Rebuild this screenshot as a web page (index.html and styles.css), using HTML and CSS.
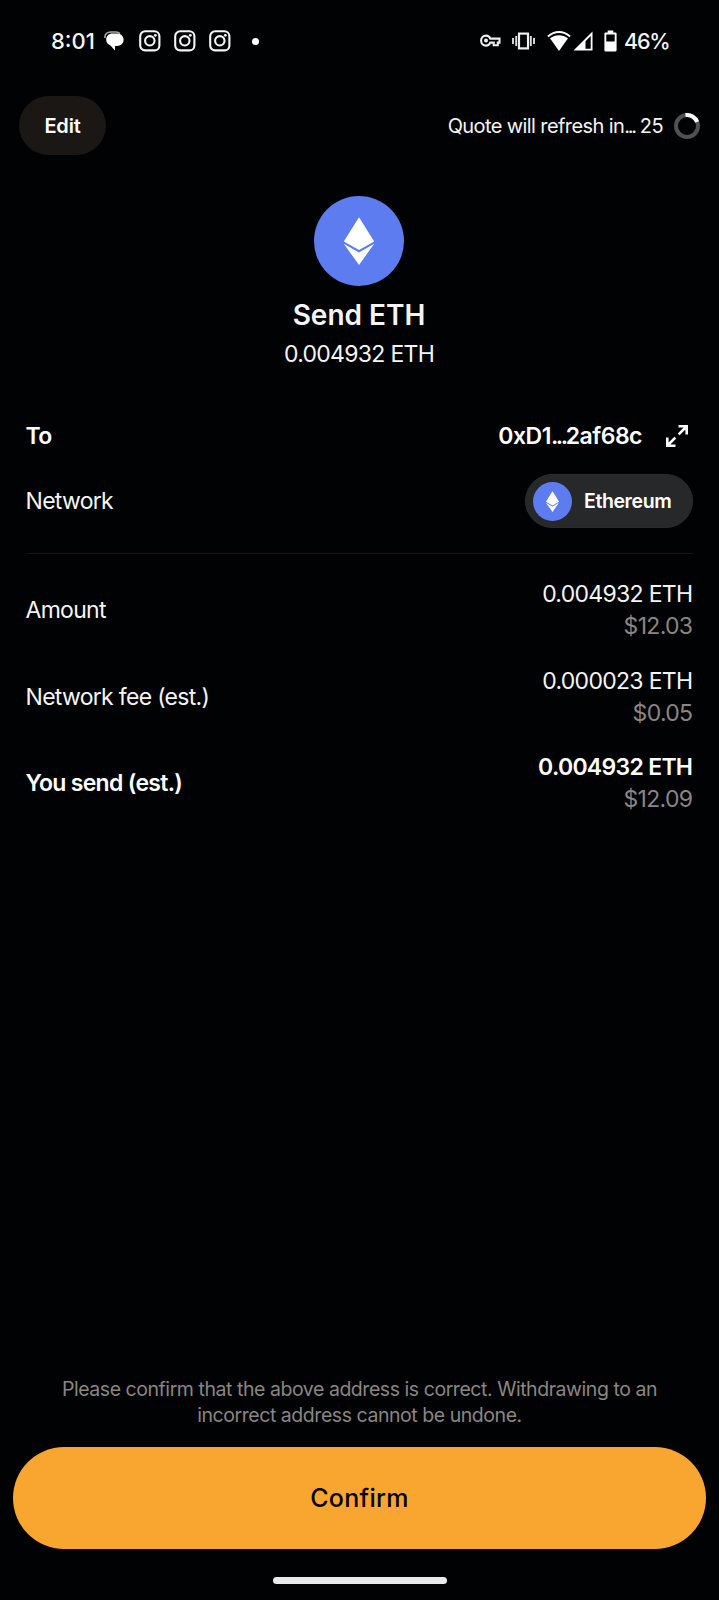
FILE: index.html
```html
<!DOCTYPE html>
<html lang="en">
<head>
  <meta charset="UTF-8">
  <meta name="viewport" content="width=device-width, initial-scale=1">
  <title>Send ETH</title>
  <link rel="stylesheet" href="styles.css">
</head>
<body>
  <!-- shared icon shapes -->
  <svg class="defs" width="0" height="0">
    <symbol id="instagram" viewBox="0 0 22 22">
      <rect x="1.2" y="1.2" width="19.2" height="19.2" rx="5" fill="none" stroke="currentColor" stroke-width="2.1"/>
      <circle cx="10.8" cy="10.8" r="4.7" fill="none" stroke="currentColor" stroke-width="2.1"/>
      <circle cx="16.3" cy="5.3" r="1.4" fill="currentColor"/>
    </symbol>
    <symbol id="eth" viewBox="0 0 90 90">
      <circle cx="45" cy="45" r="45" fill="#5d7cf0"/>
      <path d="M45 21.3 L60.2 45.6 L45 54 L29.8 45.6 Z" fill="#fff"/>
      <path d="M29.8 47.8 L45 56.4 L60.2 47.8 L45 69 Z" fill="#fff"/>
    </symbol>
  </svg>

  <div class="status-bar">
    <div class="status-left">
      <span class="clock">8:01</span>
      <svg class="chat" width="20" height="20" viewBox="0 0 20 20">
        <path d="M1 7 C0.5 3 3 1 7 1 H12 C14 1 15 1.6 16 2.6" fill="none" stroke="#aaa" stroke-width="1.6"/>
        <path d="M8.5 2.5 H12.5 C17 2.5 19.6 5 19.6 8.8 C19.6 12.5 17 15 12.5 15 H11 V19.6 L6.5 14.6 C4 13.5 2.2 11.5 2.2 8.8 C2.2 5 4.5 2.5 8.5 2.5 Z" fill="#fff"/>
      </svg>
      <svg class="insta" width="22" height="22"><use href="#instagram"/></svg>
      <svg class="insta" width="22" height="22"><use href="#instagram"/></svg>
      <svg class="insta" width="22" height="22"><use href="#instagram"/></svg>
      <span class="dot"></span>
    </div>
    <div class="status-right">
      <svg class="key" width="21" height="14" viewBox="0 0 21 14">
        <path d="M10.3 4.600 H19.5 V8.600 H17.8 V11.300 H13.7 V8.600 H10.3 C9.5 10.600 7.8 11.600 6 11.600 C3.2 11.600 1.1 9.4 1.1 6.6 C1.1 3.8 3.2 1.6 6 1.6 C7.9 1.6 9.5 2.6 10.3 4.6 Z" fill="none" stroke="#eee" stroke-width="2.1"/>
        <circle cx="6" cy="6.6" r="2" fill="#eee"/>
      </svg>
      <svg class="vibrate" width="23" height="18" viewBox="0 0 23 18">
        <rect x="7" y="1.6" width="9" height="14.8" fill="none" stroke="#eee" stroke-width="2.2"/>
        <path d="M4.2 4 V14 M1 6 V12 M18.8 4 V14 M22 6 V12" stroke="#ddd" stroke-width="1.9"/>
      </svg>
      <svg class="wifi" width="24" height="21" viewBox="0 0 24 21">
        <path d="M0.9 5.5 C7.5 -0.5 16.5 -0.5 23.1 5.5" fill="none" stroke="#fff" stroke-width="1.8"/>
        <path d="M3 7.3 C8.5 3.3 15.5 3.3 21 7.3 L12 20 Z" fill="#fff"/>
      </svg>
      <svg class="signal" width="20" height="20" viewBox="0 0 20 20">
        <path d="M19.5 0.5 V19.5 H0.5 Z M17.7 5 L12.5 10.2 V17.7 H17.7 Z" fill="#fff" fill-rule="evenodd"/>
      </svg>
      <svg class="battery" width="13" height="22" viewBox="0 0 13 22">
        <path d="M3.7 0.6 H9.3 V2.5 H11.5 Q12.6 2.5 12.6 3.6 V20.3 Q12.6 21.4 11.5 21.4 H1.5 Q0.4 21.4 0.4 20.3 V3.6 Q0.4 2.5 1.5 2.5 H3.7 Z M2.3 4.4 V11.5 H10.7 V4.4 Z" fill="#fff" fill-rule="evenodd"/>
      </svg>
      <span class="percent">46%</span>
    </div>
  </div>

  <header class="top">
    <button class="edit">Edit</button>
    <div class="refresh">
      <span class="refresh-text">Quote will refresh in<span class="dots">...</span> 25</span>
      <svg width="26" height="26" viewBox="0 0 26 26">
        <circle cx="13" cy="13" r="11" fill="none" stroke="#515151" stroke-width="4"/>
        <path d="M11.5 2.1 A11 11 0 0 1 23.2 9" fill="none" stroke="#fff" stroke-width="4"/>
      </svg>
    </div>
  </header>

  <section class="token">
    <svg width="90" height="90"><use href="#eth"/></svg>
    <h1>Send ETH</h1>
    <p>0.004932 ETH</p>
  </section>

  <main class="details">
    <div class="row to">
      <span class="label bold">To</span>
      <div class="address">
        <span class="bold hash">0xD1<span class="dots">...</span>2af68c</span>
        <svg width="22" height="22" viewBox="0 0 22 22">
          <path d="M12.5 1.3 H20.7 V9.5 M20 2 L12.7 9.3 M1.3 12.5 V20.7 H9.5 M2 20 L9.3 12.7" fill="none" stroke="#fff" stroke-width="2.6"/>
        </svg>
      </div>
    </div>
    <div class="row network">
      <span class="label">Network</span>
      <div class="pill">
        <svg width="39" height="39"><use href="#eth"/></svg>
        <span>Ethereum</span>
      </div>
    </div>
    <div class="divider"></div>
    <div class="row amount">
      <span class="label">Amount</span>
      <div class="value"><span>0.004932 ETH</span><span class="fiat">$12.03</span></div>
    </div>
    <div class="row amount">
      <span class="label">Network fee (est.)</span>
      <div class="value"><span>0.000023 ETH</span><span class="fiat">$0.05</span></div>
    </div>
    <div class="row amount">
      <span class="label bold">You send (est.)</span>
      <div class="value"><span class="bold">0.004932 ETH</span><span class="fiat">$12.09</span></div>
    </div>
  </main>

  <footer>
    <p class="notice">Please confirm that the above address is correct. Withdrawing to an<br>incorrect address cannot be undone.</p>
    <button class="confirm">Confirm</button>
    <div class="home-bar"></div>
  </footer>
</body>
</html>
```

FILE: styles.css
```css
* {
  box-sizing: border-box;
}

body {
  margin: 0;
  height: 1600px;
  display: flex;
  flex-direction: column;
  background: #010204;
  color: #f5f5f5;
  font-family: Inter, "Liberation Sans", sans-serif;
  font-size: 23px;
  overflow: hidden;
}

h1, p {
  margin: 0;
}

button {
  border: none;
  padding: 0;
  font-family: inherit;
}

svg {
  display: block;
  flex-shrink: 0;
}

.defs {
  position: absolute;
}

.bold {
  font-weight: 600;
  color: #fff;
}

.dots {
  letter-spacing: -2.4px;
}

.status-bar {
  height: 82px;
  padding: 0 51px;
  display: flex;
  justify-content: space-between;
  align-items: center;
  font-size: 22px;
  font-weight: 500;
}

.status-left, .status-right {
  display: flex;
  align-items: center;
}

.clock {
  width: 53px;
}

.chat {
  margin-right: 15px;
}

.insta {
  margin-right: 13px;
}

.dot {
  width: 7px;
  height: 7px;
  margin-left: 8px;
  border-radius: 50%;
  background: #fff;
}

.key {
  margin-right: 11px;
}

.vibrate {
  margin-right: 12px;
}

.wifi {
  margin-right: 2px;
}

.signal {
  margin-right: 11px;
}

.battery {
  margin-right: 7px;
}

.percent {
  width: 44px;
  font-size: 21.5px;
  letter-spacing: -1.2px;
  white-space: nowrap;
}

.top {
  height: 59px;
  margin: 14px 19px 0;
  display: flex;
  justify-content: space-between;
  align-items: center;
}

.edit {
  width: 87px;
  height: 59px;
  border-radius: 30px;
  background: #1b1715;
  color: #fff;
  font-size: 20px;
  font-weight: 600;
  letter-spacing: -0.2px;
}

.refresh {
  display: flex;
  align-items: center;
  gap: 11px;
  font-size: 20px;
}

.refresh-text {
  letter-spacing: -0.6px;
}

.refresh-text .dots {
  letter-spacing: -2.2px;
}

.token {
  margin-top: 41px;
  padding-right: 1px;
  display: flex;
  flex-direction: column;
  align-items: center;
}

.token h1 {
  margin-top: 11px;
  line-height: 36px;
  font-size: 28px;
  font-weight: 600;
}

.token p {
  margin-top: 6px;
  line-height: 30px;
  letter-spacing: -0.7px;
}

.details {
  margin: 45px 26px 0;
}

.row {
  display: flex;
  justify-content: space-between;
  align-items: center;
}

.label {
  margin-left: -0.5px;
  letter-spacing: -0.7px;
}

.to {
  height: 44px;
  margin-bottom: 16px;
}

.address {
  display: flex;
  align-items: center;
  gap: 24px;
  padding-right: 5px;
}

.hash {
  letter-spacing: -0.5px;
}

.network {
  height: 54px;
}

.pill {
  width: 168px;
  height: 54px;
  padding-left: 7px;
  display: flex;
  align-items: center;
  gap: 12px;
  border: 1px solid #2e2a28;
  border-radius: 27px;
  background: #272829;
  color: #fff;
  font-size: 19.5px;
  font-weight: 600;
  letter-spacing: -0.4px;
}

.divider {
  height: 1px;
  margin: 25px 0 24px;
  background: #151617;
}

.amount {
  height: 64px;
  margin-bottom: 22.7px;
}

.value {
  padding-right: 0.7px;
  display: flex;
  flex-direction: column;
  align-items: flex-end;
  line-height: 32px;
  letter-spacing: -0.7px;
}

.fiat {
  color: #8b8682;
}

footer {
  margin-top: auto;
  padding: 0 13px 16px;
  display: flex;
  flex-direction: column;
  align-items: center;
}

.notice {
  margin-bottom: 19px;
  color: #8b8682;
  font-size: 19.5px;
  line-height: 25.5px;
  letter-spacing: -0.45px;
  text-align: center;
  white-space: nowrap;
}

.confirm {
  width: 100%;
  height: 102px;
  border-radius: 51px;
  background: #f9a630;
  color: #000;
  font-size: 25px;
  font-weight: 500;
  letter-spacing: 0.3px;
}

.home-bar {
  width: 174px;
  height: 7px;
  margin-top: 28px;
  border-radius: 4px;
  background: #e9e9e9;
}
```
